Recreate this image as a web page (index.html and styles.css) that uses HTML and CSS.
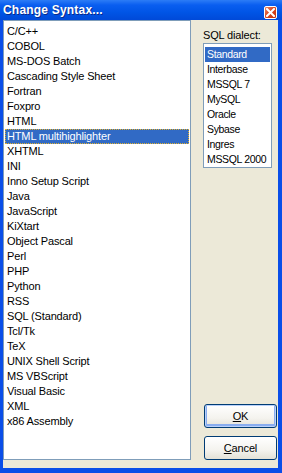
FILE: index.html
```html
<!DOCTYPE html>
<html lang="en">
<head>
    <meta charset="UTF-8">
    <title>Change Syntax...</title>
    <link rel="stylesheet" href="styles.css">
</head>
<body>
<div class="dlg">
    <div class="dlgtitle">
        <span class="dlgcaption">Change Syntax...</span>
        <div class="dlgclose">
            <svg width="9" height="9" viewBox="0 0 9 9">
                <path d="M1 1 L8 8 M8 1 L1 8" stroke="#fff" stroke-width="2" stroke-linecap="square"/>
            </svg>
        </div>
    </div>
    <div class="dlgbody">
        <div class="synlist">
            <div class="synitem">C/C++</div>
            <div class="synitem">COBOL</div>
            <div class="synitem">MS-DOS Batch</div>
            <div class="synitem">Cascading Style Sheet</div>
            <div class="synitem">Fortran</div>
            <div class="synitem">Foxpro</div>
            <div class="synitem">HTML</div>
            <div class="synitem sel focus">HTML multihighlighter</div>
            <div class="synitem">XHTML</div>
            <div class="synitem">INI</div>
            <div class="synitem">Inno Setup Script</div>
            <div class="synitem">Java</div>
            <div class="synitem">JavaScript</div>
            <div class="synitem">KiXtart</div>
            <div class="synitem">Object Pascal</div>
            <div class="synitem">Perl</div>
            <div class="synitem">PHP</div>
            <div class="synitem">Python</div>
            <div class="synitem">RSS</div>
            <div class="synitem">SQL (Standard)</div>
            <div class="synitem">Tcl/Tk</div>
            <div class="synitem">TeX</div>
            <div class="synitem">UNIX Shell Script</div>
            <div class="synitem">MS VBScript</div>
            <div class="synitem">Visual Basic</div>
            <div class="synitem">XML</div>
            <div class="synitem">x86 Assembly</div>
        </div>
        <div class="side">
            <div class="sidelabel">SQL dialect:</div>
            <div class="sqllist">
                <div class="synitem sel">Standard</div>
                <div class="synitem">Interbase</div>
                <div class="synitem">MSSQL 7</div>
                <div class="synitem">MySQL</div>
                <div class="synitem">Oracle</div>
                <div class="synitem">Sybase</div>
                <div class="synitem">Ingres</div>
                <div class="synitem">MSSQL 2000</div>
            </div>
            <div class="btn btnok"><u>O</u>K</div>
            <div class="btn"><u>C</u>ancel</div>
        </div>
    </div>
</div>
</body>
</html>
```

FILE: styles.css
```css
html, body{
    margin:0;
    padding:0;
    background:#ece9d8;
}
.dlg{
    width:282px;
    height:473px;
    box-sizing:border-box;
    border-left:3px solid #0a4ee8;
    border-right:4px solid #0a4ee8;
    border-bottom:5px solid #0a4ee8;
    background:#ece9d8;
    display:flex;
    flex-direction:column;
    font-family:"Liberation Sans", Arial, sans-serif;
    font-size:11px;
    letter-spacing:-0.15px;
    color:#000;
}
.dlgtitle{
    height:20px;
    margin:0 -4px 0 -3px;
    background:linear-gradient(#2c7cf6 0%, #0a5ef0 25%, #0055e6 60%, #0049d8 100%);
    display:flex;
    align-items:center;
    justify-content:space-between;
    padding:0 5px 0 3px;
}
.dlgcaption{
    color:#fff;
    font-family:"Liberation Sans", Arial, sans-serif;
    font-weight:bold;
    font-size:12px;
    letter-spacing:0.2px;
    text-shadow:1px 1px 0 #0a2a8a;
}
.dlgclose{
    width:13px;
    height:13px;
    box-sizing:border-box;
    border:1px solid #fff;
    border-radius:2px;
    background:linear-gradient(135deg, #e88a6a 0%, #d9431c 50%, #c2360f 100%);
    display:flex;
    align-items:center;
    justify-content:center;
    margin-top:4px;
}
.dlgclose svg{
    display:block;
}
.dlgbody{
    flex:1;
    display:flex;
    padding-bottom:8px;
}
.synlist{
    width:188px;
    box-sizing:border-box;
    border:1px solid #7f9db9;
    background:#fff;
    padding:3px 1px 2px 1px;
}
.synitem{
    height:15px;
    line-height:15px;
    padding-left:2px;
    white-space:nowrap;
}
.sel{
    background:#316ac5;
    color:#fff;
}
.focus{
    outline:1px dotted #e0b030;
    outline-offset:-1px;
}
.side{
    flex:1;
    display:flex;
    flex-direction:column;
    padding-left:12px;
}
.sidelabel{
    margin-top:8px;
    height:15px;
    line-height:15px;
}
.sqllist{
    width:69px;
    height:125px;
    box-sizing:border-box;
    border:1px solid #7f9db9;
    background:#fff;
    padding:3px 1px 2px 1px;
    overflow:hidden;
    font-size:10.5px;
    letter-spacing:-0.35px;
}
.btn{
    width:73px;
    height:24px;
    box-sizing:border-box;
    margin-left:1px;
    border:1px solid #003c74;
    border-radius:3px;
    background:linear-gradient(#ffffff 0%, #f4f3ee 60%, #e3e1d6 100%);
    text-align:center;
    line-height:22px;
    margin-top:8px;
}
.btnok{
    margin-top:auto;
    box-shadow:inset 0 0 0 1px #b9d1fa, inset 0 -1px 0 2px #89adef;
}
.btn u{
    text-decoration:underline;
}
```
